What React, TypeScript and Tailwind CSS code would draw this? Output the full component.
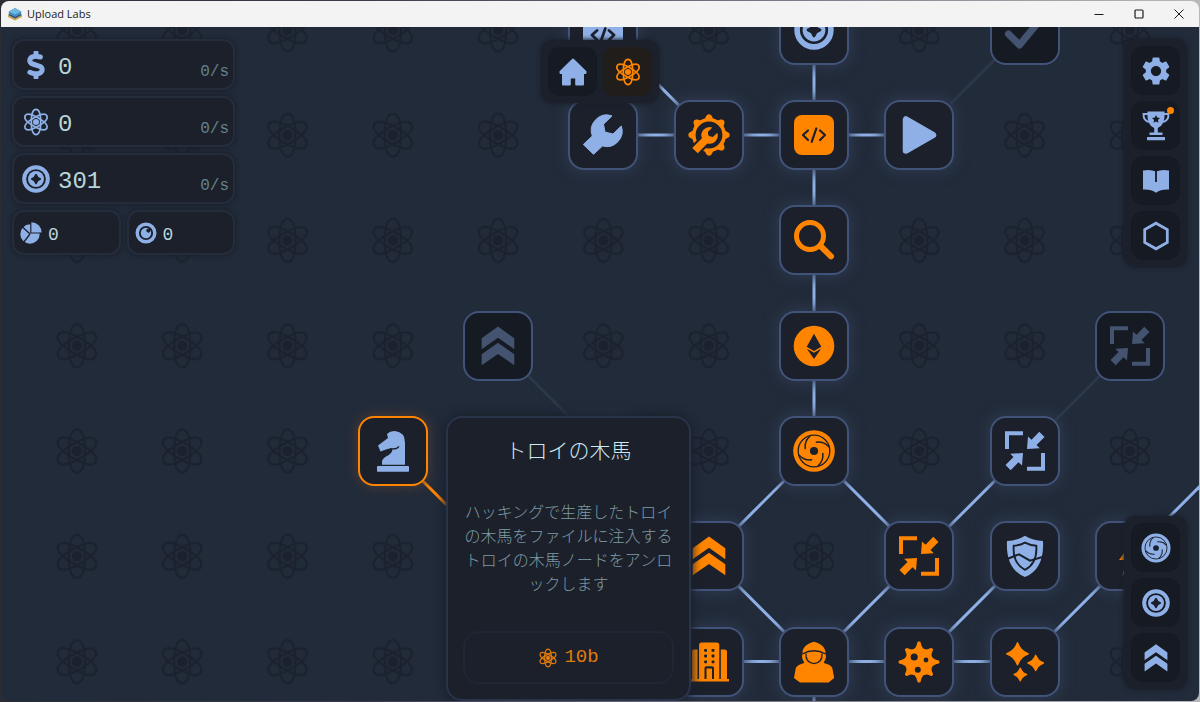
import React from "react";
import { FaDollarSign } from "react-icons/fa6";
import { MdSettings } from "react-icons/md";

type IconProps = { className?: string };

const DARK = "#1b202b";
const STEP = 105.3;
const ORIGIN_X = 75.9;
const ORIGIN_Y = 2.8;
const NODE = 70;

const px = (col: number) => ORIGIN_X + STEP * col;
const py = (row: number) => ORIGIN_Y + STEP * row;

function Svg({ className, children, box = "0 0 40 40" }: IconProps & { children: React.ReactNode; box?: string }) {
  return (
    <svg viewBox={box} className={className} fill="currentColor" overflow="visible" aria-hidden="true">
      {children}
    </svg>
  );
}

const orbitPath = "M24 2.5 C30 2.5 32 13 32 24 C32 35 30 45.5 24 45.5 C18 45.5 16 35 16 24 C16 13 18 2.5 24 2.5Z";

function AtomShape({ stroke }: { stroke: number }) {
  return (
    <>
      <g fill="none" stroke="currentColor" strokeWidth={stroke}>
        <path d={orbitPath} />
        <path d={orbitPath} transform="rotate(60 24 24)" />
        <path d={orbitPath} transform="rotate(-60 24 24)" />
      </g>
      <circle cx="24" cy="24" r="5.2" fill="currentColor" />
    </>
  );
}

const Atom = ({ className }: IconProps) => (
  <Svg className={className} box="0 0 48 48">
    <AtomShape stroke={3} />
  </Svg>
);

const wrenchPath =
  "M29 .9 L20.5 9.2 L22 17 L30 19 L38.3 11 A15.5 15.5 0 0 1 19.5 31 L10.5 39.3 L.3 29.5 L9.3 21 A15.5 15.5 0 0 1 29 .9Z";
const longWrenchPath =
  "M29 .9 L20.5 9.2 L22 17 L30 19 L38.3 11 A15.5 15.5 0 0 1 19.5 31 L1.5 49.5 L-9 39.5 L9.3 21 A15.5 15.5 0 0 1 29 .9Z";

const Wrench = ({ className }: IconProps) => (
  <Svg className={className}>
    <path d={wrenchPath} stroke="currentColor" strokeWidth="1" strokeLinejoin="round" />
  </Svg>
);

const GearWrench = ({ className }: IconProps) => (
  <Svg className={className}>
    <circle cx="20" cy="20" r="15.2" fill="none" stroke="currentColor" strokeWidth="3.6" />
    {[0, 45, 90, 135, 180, 225, 270, 315].map((a) => (
      <path
        key={a}
        d="M15 5.5 L17.2 1 Q18 -.7 20 -.7 Q22 -.7 22.8 1 L25 5.5Z"
        transform={`rotate(${a} 20 20)`}
      />
    ))}
    <g transform="translate(8 12) scale(.53)">
      <path d="M19.5 31 L1.5 49.5 L-9 39.5 L9.3 21Z" fill={DARK} stroke={DARK} strokeWidth="8" />
      <path d={longWrenchPath} />
    </g>
  </Svg>
);

const CodeMark = ({ weight = 2.2 }: { weight?: number }) => (
  <path
    d="M14 15.5 L9 20 L14 25 M26 15.5 L31 20 L26 25 M22.3 13.5 L17.7 26.8"
    fill="none"
    stroke={DARK}
    strokeWidth={weight}
    strokeLinecap="round"
    strokeLinejoin="round"
  />
);

const CodeBox = ({ className }: IconProps) => (
  <Svg className={className}>
    <rect width="40" height="40" rx="8" />
    <CodeMark />
  </Svg>
);

const CodeWindow = ({ className }: IconProps) => (
  <Svg className={className}>
    <rect width="40" height="40" rx="3" />
    <g transform="translate(0 5)">
      <CodeMark weight={2.8} />
    </g>
  </Svg>
);

const Play = ({ className }: IconProps) => (
  <Svg className={className}>
    <path d="M7 4.5 V35.5 L34 20Z" stroke="currentColor" strokeWidth="6.5" strokeLinejoin="round" />
  </Svg>
);

const Check = ({ className }: IconProps) => (
  <Svg className={className}>
    <path d="M3.5 24 L14.5 35 L36 9" fill="none" stroke="currentColor" strokeWidth="7" strokeLinecap="round" strokeLinejoin="round" />
  </Svg>
);

const Search = ({ className }: IconProps) => (
  <Svg className={className}>
    <g fill="none" stroke="currentColor">
      <circle cx="16" cy="16" r="13.5" strokeWidth="5" />
      <path d="M27 26.5 L37 36.3" strokeWidth="6" strokeLinecap="round" />
    </g>
  </Svg>
);

const Ethereum = ({ className }: IconProps) => (
  <Svg className={className}>
    <circle cx="20" cy="20" r="20.3" />
    <path d="M20 7.8 L27.3 20.8 L20 25 L12.7 20.8Z M12.9 22.8 L20 26.8 L27.1 22.8 L20 33Z" fill={DARK} />
  </Svg>
);

const Swirl = ({ className }: IconProps) => (
  <Svg className={className}>
    <circle cx="20" cy="20" r="20.8" />
    <circle cx="20" cy="20" r="15.8" fill="none" stroke={DARK} strokeWidth="1.3" />
    <circle cx="20" cy="20" r="4.1" fill={DARK} />
    {[0, 90, 180, 270].map((a) => (
      <path
        key={a}
        d="M11.2 17.6 Q10.3 10.3 15.8 5.2"
        fill="none"
        stroke={DARK}
        strokeWidth="1.5"
        strokeLinecap="round"
        transform={`rotate(${a} 20 20)`}
      />
    ))}
  </Svg>
);

const Coin = ({ className }: IconProps) => (
  <Svg className={className}>
    <circle cx="20" cy="20" r="16.9" fill="none" stroke="currentColor" strokeWidth="5.6" />
    <circle cx="20" cy="20" r="11.4" />
    <path
      d="M20 14 L22.2 17.8 L26 20 L22.2 22.2 L20 26 L17.8 22.2 L14 20 L17.8 17.8Z"
      fill={DARK}
      stroke={DARK}
      strokeWidth="2.6"
      strokeLinejoin="round"
    />
  </Svg>
);

const Chevrons = ({ className }: IconProps) => (
  <Svg className={className}>
    <path d="M20 .5 L36.3 12.3 V23.3 L20 11.7 L3.7 23.3 V12.3Z" />
    <path d="M20 16.7 L36.3 28.3 V39.3 L20 28 L3.7 39.3 V28.3Z" />
  </Svg>
);

const Collapse = ({ className }: IconProps) => (
  <Svg className={className}>
    {[0, 180].map((a) => (
      <g key={a} transform={`rotate(${a} 20 20)`}>
        <path d="M0 .3 H18 V4.3 H4 V18 H0Z" />
        <path d="M22 18 L23 5.5 L26.5 8.7 L34.3 .8 L39.5 6 L31.5 14 L34.8 17.2Z" />
      </g>
    ))}
  </Svg>
);

const Knight = ({ className }: IconProps) => (
  <Svg className={className}>
    <rect x="4" y="35" width="32" height="5.8" rx=".8" />
    <path d="M9 33.8 V30.5 Q9.5 27 15 24.5 Q19.5 22 19.5 17.6 Q15.5 17.4 13 18.5 L7.5 20.5 L5 14.5 L15 7 L14 3 Q17 0 22 0 Q32 1 32 12 V33.8Z" />
    <path d="M17 17.6 Q23.5 18.8 26 15.3" fill="none" stroke={DARK} strokeWidth="1.2" />
  </Svg>
);

const Shield = ({ className }: IconProps) => (
  <Svg className={className}>
    <path d="M20 -.3 Q28 4.7 38 5 Q39.5 33 20 41 Q.5 33 2 5 Q12 4.7 20 -.3Z" />
    <path d="M20 6.6 Q25 9.3 31.3 9.8 Q32.5 27.5 20 33.8 Q7.5 27.5 8.7 9.8 Q15 9.3 20 6.6Z" fill="none" stroke={DARK} strokeWidth="1.9" />
    <path d="M1 23.5 L14 18.3 L25 24.6 L39 20.5" fill="none" stroke={DARK} strokeWidth="2" />
  </Svg>
);

const Bolt = ({ className }: IconProps) => (
  <Svg className={className}>
    <path d="M22 6 L9 24 H16 L12.5 40 L24 23Z" />
  </Svg>
);

const Building = ({ className }: IconProps) => (
  <Svg className={className}>
    <path d="M0 37 H40 V39.6 H0Z M3 9 Q3 7.5 4.5 7.5 H8.5 V37.5 H3Z M31.8 7.5 H35.5 Q38 7.5 38 9.5 V37.5 H31.8Z M10 3 Q10 .5 12.5 .5 H27.8 Q30.3 .5 30.3 3 V37.5 H10Z" />
    <g fill={DARK}>
      {[7, 12.6, 18.4].map((y) => (
        <React.Fragment key={y}>
          <rect x="15.2" y={y} width="2.8" height="2.8" rx=".6" />
          <rect x="22.6" y={y} width="2.8" height="2.8" rx=".6" />
        </React.Fragment>
      ))}
      <path d="M15.5 37 V26 Q15.5 24.2 17.3 24.2 H23.2 Q25 24.2 25 26 V37 H23 V26.5 H17.5 V37Z" />
    </g>
  </Svg>
);

const Hacker = ({ className }: IconProps) => (
  <Svg className={className}>
    <path d="M20 -.2 C27 1.5 32 5.5 31.5 12 C33 16 30.5 18 29.8 21 Q37 22.5 38.3 26 L40.2 36 L34.5 40.5 H6 L0 36 L1.8 26 Q3.5 22.5 10.3 21 C9.5 18 7 16 8.5 12 C8 5.5 13 1.5 20 -.2Z" />
    <g fill="none" stroke={DARK} strokeWidth="1.3">
      <path d="M8.3 12 Q20 5.5 31.7 12" />
      <path d="M12 11.5 C11.5 17 14 20.8 20 21.6 C26 20.8 28.5 17 28 11.5" />
    </g>
  </Svg>
);

const virusOutline = (() => {
  const pt = (deg: number, r: number) => {
    const a = (deg * Math.PI) / 180;
    return `${(20 + r * Math.sin(a)).toFixed(2)} ${(20 - r * Math.cos(a)).toFixed(2)}`;
  };
  let d = `M${pt(0, 19.5)}`;
  for (let i = 0; i < 8; i++) {
    const r = i % 2 ? 18 : 19.5;
    const next = i % 2 ? 19.5 : 18;
    d += ` L${pt(i * 45 + 2, r)} Q${pt(i * 45 + 10, 13)} ${pt(i * 45 + 22.5, 13.2)} Q${pt(i * 45 + 35, 13)} ${pt((i + 1) * 45 - 2, next)} L${pt((i + 1) * 45, next)}`;
  }
  return `${d}Z`;
})();

const Virus = ({ className }: IconProps) => (
  <Svg className={className}>
    <path d={virusOutline} stroke="currentColor" strokeWidth="1.8" strokeLinejoin="round" />
    <circle cx="15.2" cy="15" r="3.6" fill={DARK} />
    <circle cx="27" cy="18" r="2.4" fill={DARK} />
    <circle cx="18.8" cy="27.8" r="3" fill={DARK} />
  </Svg>
);

const Sparkles = ({ className }: IconProps) => (
  <Svg className={className}>
    <g stroke="currentColor" strokeWidth="1.4" strokeLinejoin="round">
      <path d="M12.5 .8 Q15.2 9 23.3 11.8 Q15.2 14.6 12.5 22.8 Q9.8 14.6 1.7 11.8 Q9.8 9 12.5 .8Z" />
      <path d="M30.7 13.3 Q32.7 19 38.4 21 Q32.7 23 30.7 28.6 Q28.7 23 23 21 Q28.7 19 30.7 13.3Z" />
      <path d="M15.3 26.3 Q17 31 21.5 32.5 Q17 34 15.3 38.8 Q13.6 34 9.2 32.5 Q13.6 31 15.3 26.3Z" />
    </g>
  </Svg>
);

const Home = ({ className }: IconProps) => (
  <Svg className={className} box="0 0 28 28">
    <path d="M14 1.5 L26.5 13.8 V15 H24 V26.5 H17.2 V19.5 H10.8 V26.5 H4 V15 H1.5 V13.8Z" stroke="currentColor" strokeWidth="2" strokeLinejoin="round" />
  </Svg>
);

const Trophy = ({ className }: IconProps) => (
  <Svg className={className} box="0 0 28 30">
    <path d="M5.5 .5 H22.5 V5 C22.5 12 19 15.5 15.8 17 V21.5 H20.5 V24 H7.5 V21.5 H12.2 V17 C9 15.5 5.5 12 5.5 5Z M5 26 H23 V29.3 H5Z" />
    <path d="M6 3 H1.5 Q1.3 10.5 8 11 M22 3 H26.5 Q26.7 10.5 20 11" fill="none" stroke="currentColor" strokeWidth="1.9" />
    <path d="M14 4 L15.2 6.6 L18 7 L15.9 9 L16.5 11.8 L14 10.4 L11.5 11.8 L12.1 9 L10 7 L12.8 6.6Z" fill="#161a22" />
  </Svg>
);

const Book = ({ className }: IconProps) => (
  <Svg className={className} box="0 0 28 24">
    <path d="M1 1.5 Q8 0 14 2.5 Q20 0 27 1.5 V20.5 Q19 20 14 23.7 Q9 20 1 20.5Z" />
    <path d="M14 2 V13" stroke="#161a22" strokeWidth="1.8" />
  </Svg>
);

const Hexagon = ({ className }: IconProps) => (
  <Svg className={className} box="0 0 28 30">
    <path d="M14 2.2 L25.3 8.6 V21.4 L14 27.8 L2.7 21.4 V8.6Z" fill="none" stroke="currentColor" strokeWidth="2.8" />
  </Svg>
);

const Pie = ({ className }: IconProps) => (
  <Svg className={className} box="0 0 22 22">
    <circle cx="10" cy="12" r="9.7" />
    <path d="M10 12 L2 4.5 M10 12 L3.5 20.5" stroke={DARK} strokeWidth="1.3" />
    <path d="M10.2 11.6 V0 H22 V11.6Z" fill={DARK} />
    <path d="M11.4 10.6 V.3 A10.3 10.3 0 0 1 21.6 10.6Z" />
  </Svg>
);

const Token = ({ className }: IconProps) => (
  <Svg className={className} box="0 0 22 22">
    <circle cx="11" cy="11" r="8.8" fill="none" stroke="currentColor" strokeWidth="3.4" />
    <circle cx="11" cy="11" r="5.2" />
    <circle cx="13.4" cy="8.6" r="2.1" fill={DARK} />
  </Svg>
);

const AppLogo = ({ className }: IconProps) => (
  <svg viewBox="0 0 14 14" className={className} aria-hidden="true">
    <path d="M0 8 L7 5 L14 8 V10 L7 13.5 L0 10Z" fill="#c9a25c" />
    <path d="M.8 6.5 L7 9.5 L13.2 6.5 V8.3 L7 11.5 L.8 8.3Z" fill="#23557c" />
    <path d="M.8 4.5 L7 1 L13.2 4.5 V6.5 L7 9.8 L.8 6.5Z" fill="#3f8fc6" />
    <path d="M.8 4.5 L7 1 L13.2 4.5 L7 7.6Z" fill="#6db8e0" />
  </svg>
);

type Tone = "blue" | "orange" | "locked";
type SkillNode = { col: number; row: number; name: string; icon: React.FC<IconProps>; tone: Tone; selected?: boolean };

const nodes: SkillNode[] = [
  { col: 5, row: 0, name: "Code window", icon: CodeWindow, tone: "blue" },
  { col: 7, row: 0, name: "Coin", icon: Coin, tone: "blue" },
  { col: 9, row: 0, name: "Check", icon: Check, tone: "locked" },
  { col: 5, row: 1, name: "Wrench", icon: Wrench, tone: "blue" },
  { col: 6, row: 1, name: "Maintenance", icon: GearWrench, tone: "orange" },
  { col: 7, row: 1, name: "Code", icon: CodeBox, tone: "orange" },
  { col: 8, row: 1, name: "Play", icon: Play, tone: "blue" },
  { col: 7, row: 2, name: "Search", icon: Search, tone: "orange" },
  { col: 4, row: 3, name: "Upgrade", icon: Chevrons, tone: "locked" },
  { col: 7, row: 3, name: "Ethereum", icon: Ethereum, tone: "orange" },
  { col: 10, row: 3, name: "Compress", icon: Collapse, tone: "locked" },
  { col: 3, row: 4, name: "トロイの木馬", icon: Knight, tone: "blue", selected: true },
  { col: 5, row: 4, name: "Upgrade", icon: Chevrons, tone: "blue" },
  { col: 7, row: 4, name: "Vortex", icon: Swirl, tone: "orange" },
  { col: 9, row: 4, name: "Compress", icon: Collapse, tone: "blue" },
  { col: 6, row: 5, name: "Upgrade", icon: Chevrons, tone: "orange" },
  { col: 8, row: 5, name: "Compress", icon: Collapse, tone: "orange" },
  { col: 9, row: 5, name: "Shield", icon: Shield, tone: "blue" },
  { col: 10, row: 5, name: "Power", icon: Bolt, tone: "orange" },
  { col: 6, row: 6, name: "Company", icon: Building, tone: "orange" },
  { col: 7, row: 6, name: "Hacker", icon: Hacker, tone: "orange" },
  { col: 8, row: 6, name: "Virus", icon: Virus, tone: "orange" },
  { col: 9, row: 6, name: "Sparkles", icon: Sparkles, tone: "orange" },
];

type Edge = [number, number, number, number];

const openEdges: Edge[] = [
  [5, 0, 6, 1], [5, 1, 6, 1], [6, 1, 7, 1], [7, 1, 8, 1],
  [7, 0, 7, 1], [7, 1, 7, 2], [7, 2, 7, 3], [7, 3, 7, 4],
  [7, 4, 6, 5], [7, 4, 8, 5], [6, 5, 7, 6], [8, 5, 7, 6],
  [9, 4, 8, 5], [9, 5, 8, 6], [10, 5, 9, 6], [11, 4, 10, 5],
  [6, 6, 7, 6], [7, 6, 8, 6], [8, 6, 9, 6], [7, 6, 7, 7],
];
const lockedEdges: Edge[] = [[8, 1, 9, 0], [4, 3, 5, 4], [10, 3, 9, 4]];
const activeEdges: Edge[] = [[3, 4, 4, 5]];

function Edges({ edges, color }: { edges: Edge[]; color: string }) {
  return (
    <g stroke={color} strokeWidth="3">
      {edges.map(([a, b, c, d]) => (
        <line key={`${a}-${b}-${c}-${d}`} x1={px(a)} y1={py(b)} x2={px(c)} y2={py(d)} />
      ))}
    </g>
  );
}

const toneClass: Record<Tone, string> = {
  blue: "bg-[#1b202b] text-[#8fb0e6] shadow-[0_0_14px_2px_#2d3a4f]",
  orange: "bg-[#1b202b] text-[#ff8500] shadow-[0_0_14px_2px_#2d3a4f]",
  locked: "bg-[#161a22] text-[#435370]",
};

function SkillButton({ node }: { node: SkillNode }) {
  const Icon = node.icon;
  const frame = node.selected
    ? "border-[#ff8500] bg-[#1b202b] text-[#8fb0e6] shadow-[0_0_12px_1px_#4a3a35]"
    : `border-[#425379] ${toneClass[node.tone]}`;
  return (
    <button
      type="button"
      aria-label={node.name}
      className={`absolute flex size-[70px] items-center justify-center rounded-2xl border-2 ${frame}`}
      style={{ left: Math.round(px(node.col) - NODE / 2), top: Math.round(py(node.row) - NODE / 2) }}
    >
      <Icon className="size-10" />
    </button>
  );
}

const cardClass = "rounded-xl border-2 border-[#252d3d] bg-[#1b202b] shadow-[0_0_4px_1px_#1a202c]";

function Resource({ icon, value, rate }: { icon: React.ReactNode; value: string; rate: string }) {
  return (
    <div className={`flex h-[51px] items-center pr-1 pl-2 ${cardClass}`}>
      <span className="flex w-7 justify-center text-[#8fb0e6]">{icon}</span>
      <span className="mt-1.5 ml-2 text-2xl leading-8 text-[#b9d5d9]">{value}</span>
      <span className="mt-3.5 ml-auto text-base leading-5 text-[#65828a]">{rate}</span>
    </div>
  );
}

function SmallResource({ icon, value }: { icon: React.ReactNode; value: string }) {
  return (
    <div className={`flex h-[45px] flex-1 items-center gap-1.5 px-1.5 ${cardClass}`}>
      <span className="text-[#8fb0e6]">{icon}</span>
      <span className="mt-1 text-lg text-[#b9d5d9]">{value}</span>
    </div>
  );
}

function ToolButton({ label, active, children }: { label: string; active?: boolean; children: React.ReactNode }) {
  return (
    <button
      type="button"
      aria-label={label}
      className={`relative flex size-[49px] items-center justify-center rounded-xl ${
        active ? "bg-[#211d1b] text-[#ff8500]" : "bg-[#161a22] text-[#8fb0e6]"
      }`}
    >
      {children}
    </button>
  );
}

const dockClass = "absolute flex gap-1.5 rounded-xl bg-[#1b202b] p-[7px] shadow-[0_0_4px_1px_#1a202c]";

export default function App() {
  return (
    <div className="flex h-screen flex-col overflow-hidden bg-[linear-gradient(90deg,#2c2c34,#3c3a4c_30%,#b8b8bc)] p-px font-['Liberation_Mono','Noto_Sans_CJK_JP',monospace]">
      <header className="flex h-[26px] shrink-0 items-center rounded-t-lg bg-[#f3f3f3] pl-[7px] font-['Open_Sans',sans-serif] text-[11px] text-[#1b1b1b]">
        <AppLogo className="size-3.5" />
        <h1 className="ml-[5px]">Upload Labs</h1>
        <div className="ml-auto flex h-full">
          <button type="button" aria-label="Minimize" className="flex w-10 items-center justify-center">
            <svg viewBox="0 0 10 10" className="size-2.5" stroke="#1b1b1b"><path d="M.5 5.5 H9.5" /></svg>
          </button>
          <button type="button" aria-label="Maximize" className="flex w-10 items-center justify-center">
            <svg viewBox="0 0 10 10" className="size-2.5" stroke="#1b1b1b" fill="none"><rect x="1" y="1" width="8" height="8" rx="1" strokeWidth="1.2" /></svg>
          </button>
          <button type="button" aria-label="Close" className="flex w-10 items-center justify-center">
            <svg viewBox="0 0 10 10" className="size-2.5" stroke="#1b1b1b"><path d="M.5 .5 L9.5 9.5 M9.5 .5 L.5 9.5" /></svg>
          </button>
        </div>
      </header>

      <main className="relative min-h-0 flex-1 overflow-hidden rounded-b-lg bg-[#222b3a]">
        <svg className="absolute inset-0 size-full" aria-hidden="true">
          <defs>
            <pattern id="atoms" width={STEP} height={STEP} patternUnits="userSpaceOnUse" x={ORIGIN_X - STEP / 2} y={ORIGIN_Y - STEP / 2}>
              <g color="#1b212d" transform={`translate(${STEP / 2 - 24} ${STEP / 2 - 24})`}>
                <AtomShape stroke={2.2} />
              </g>
            </pattern>
          </defs>
          <rect width="100%" height="100%" fill="url(#atoms)" />
          <Edges edges={lockedEdges} color="#2c374a" />
          <Edges edges={openEdges} color="#8fb0e6" />
          <Edges edges={activeEdges} color="#ff8500" />
        </svg>

        {nodes.map((node) => (
          <SkillButton key={`${node.col}-${node.row}`} node={node} />
        ))}

        <section className="absolute top-3 left-[11px] flex w-[223px] flex-col gap-1.5">
          <Resource icon={<FaDollarSign className="size-7" stroke="currentColor" strokeWidth="28" />} value="0" rate="0/s" />
          <Resource icon={<Atom className="size-7" />} value="0" rate="0/s" />
          <Resource icon={<Coin className="size-7" />} value="301" rate="0/s" />
          <div className="flex gap-1.5">
            <SmallResource icon={<Pie className="size-[22px]" />} value="0" />
            <SmallResource icon={<Token className="size-[22px]" />} value="0" />
          </div>
        </section>

        <nav className={`top-[13px] left-1/2 -translate-x-1/2 ${dockClass}`}>
          <ToolButton label="Home"><Home className="size-7" /></ToolButton>
          <ToolButton label="Research" active><Atom className="size-7" /></ToolButton>
        </nav>

        <nav className={`top-3 right-3 flex-col ${dockClass}`}>
          <ToolButton label="Settings"><MdSettings className="size-[34px]" /></ToolButton>
          <ToolButton label="Achievements">
            <Trophy className="h-[30px] w-7" />
            <span className="absolute top-1.5 right-1.5 size-[7px] rounded-full bg-[#ff8500]" />
          </ToolButton>
          <ToolButton label="Guide"><Book className="h-6 w-7" /></ToolButton>
          <ToolButton label="Modules"><Hexagon className="h-[30px] w-7" /></ToolButton>
        </nav>

        <nav className={`right-3 bottom-3 flex-col ${dockClass}`}>
          <ToolButton label="Vortex"><Swirl className="size-7" /></ToolButton>
          <ToolButton label="Coins"><Coin className="size-7" /></ToolButton>
          <ToolButton label="Upgrades"><Chevrons className="size-7" /></ToolButton>
        </nav>

        <article className="absolute top-[389px] left-[445px] w-[245px] rounded-2xl border-2 border-[#29334a] bg-[#1b202b] px-[15px] pt-[17px] pb-[15px] text-center font-['Noto_Sans_CJK_JP',sans-serif] font-light shadow-[0_0_10px_2px_#1a202c]">
          <h2 className="text-[21px] leading-7 text-[#cfe9ee]">トロイの木馬</h2>
          <p className="mt-9 text-base leading-6 text-[#7e9ba3] [line-break:anywhere]">
            ハッキングで生産したトロイの木馬をファイルに注入するトロイの木馬ノードをアンロックします
          </p>
          <button
            type="button"
            className="mt-9 flex h-[53px] w-full items-center justify-center gap-1.5 rounded-2xl border-2 border-[#202634] font-['Liberation_Mono',monospace] text-[19px] text-[#e27a0c]"
          >
            <Atom className="size-5" />
            10b
          </button>
        </article>
      </main>
    </div>
  );
}
